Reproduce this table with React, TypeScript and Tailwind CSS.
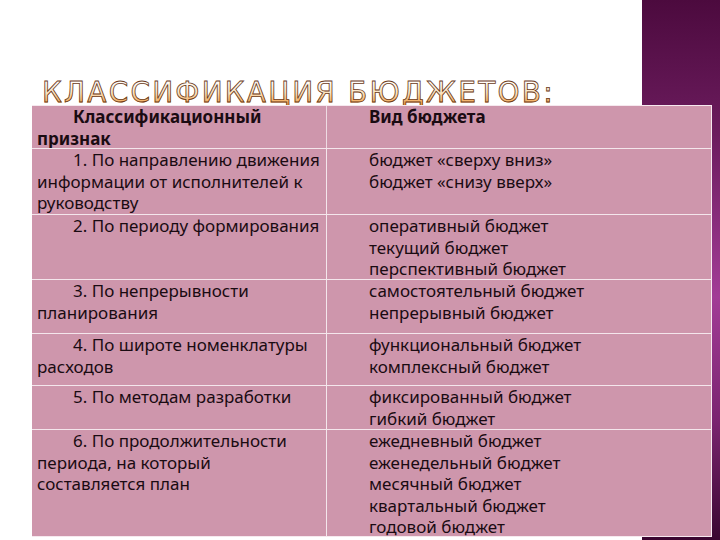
import type React from "react";

type Row = {
  height: string;
  left: string;
  right: string[];
  head?: boolean;
};

const rows: Row[] = [
  { height: "h-[42px]", left: "Классификационный признак", right: ["Вид бюджета"], head: true },
  {
    height: "h-[66px]",
    left: "1. По направлению движения информации от исполнителей к руководству",
    right: ["бюджет «сверху вниз»", "бюджет «снизу вверх»"],
  },
  {
    height: "h-[65px]",
    left: "2. По периоду формирования",
    right: ["оперативный бюджет", "текущий бюджет", "перспективный бюджет"],
  },
  {
    height: "h-[54px]",
    left: "3. По непрерывности планирования",
    right: ["самостоятельный бюджет", "непрерывный бюджет"],
  },
  {
    height: "h-[52px]",
    left: "4. По широте номенклатуры расходов",
    right: ["функциональный бюджет", "комплексный бюджет"],
  },
  {
    height: "h-[44px]",
    left: "5. По методам разработки",
    right: ["фиксированный бюджет", "гибкий бюджет"],
  },
  {
    height: "h-[107px]",
    left: "6. По продолжительности периода, на который составляется план",
    right: [
      "ежедневный бюджет",
      "еженедельный бюджет",
      "месячный бюджет",
      "квартальный бюджет",
      "годовой бюджет",
    ],
  },
];

export default function App(): React.JSX.Element {
  return (
    <div className="relative w-[720px] h-[540px] overflow-hidden bg-white font-['Noto_Sans',sans-serif]">
      {/* decorative side strip */}
      <div className="absolute inset-y-0 right-0 w-[78px] bg-[linear-gradient(180deg,#4c0a3e_0%,#6c1c5e_25%,#a23c96_55%,#7a2470_78%,#3a0630_100%)]" />

      {/* title, partly covered by the table */}
      <div className="h-[105px] pt-[81px] pl-[42px]">
        <h1 className="font-['DejaVu_Sans',sans-serif] text-[28px] leading-[24px] tracking-[2.2px] whitespace-nowrap bg-linear-to-b from-white via-[#fbe4c0] to-[#ee9a30] bg-clip-text text-transparent [-webkit-text-stroke:0.8px_#6b3a1a]">
          КЛАССИФИКАЦИЯ БЮДЖЕТОВ:
        </h1>
      </div>

      {/* table */}
      <div className="relative z-10 ml-[32px] w-[680px] grid grid-cols-[295px_385px] bg-[#ce96ac] border-t border-r border-b border-[#f6e8ee] text-[17px] leading-[21.5px] text-[#1a0b12]">
        {rows.map((row, i) => (
          <div key={i} className="contents">
            <div
              className={`${row.height} pl-[5px] pr-[4px] indent-[36px] border-r border-[#eedbe3] ${
                i > 0 ? "border-t border-[#f4e6ec]" : ""
              } ${row.head ? "font-bold" : ""}`}
            >
              {row.left}
            </div>
            <div
              className={`${row.height} pl-[42px] whitespace-nowrap ${
                i > 0 ? "border-t border-[#f4e6ec]" : ""
              } ${row.head ? "font-bold" : ""}`}
            >
              {row.right.map((line) => (
                <div key={line}>{line}</div>
              ))}
            </div>
          </div>
        ))}
      </div>
    </div>
  );
}
